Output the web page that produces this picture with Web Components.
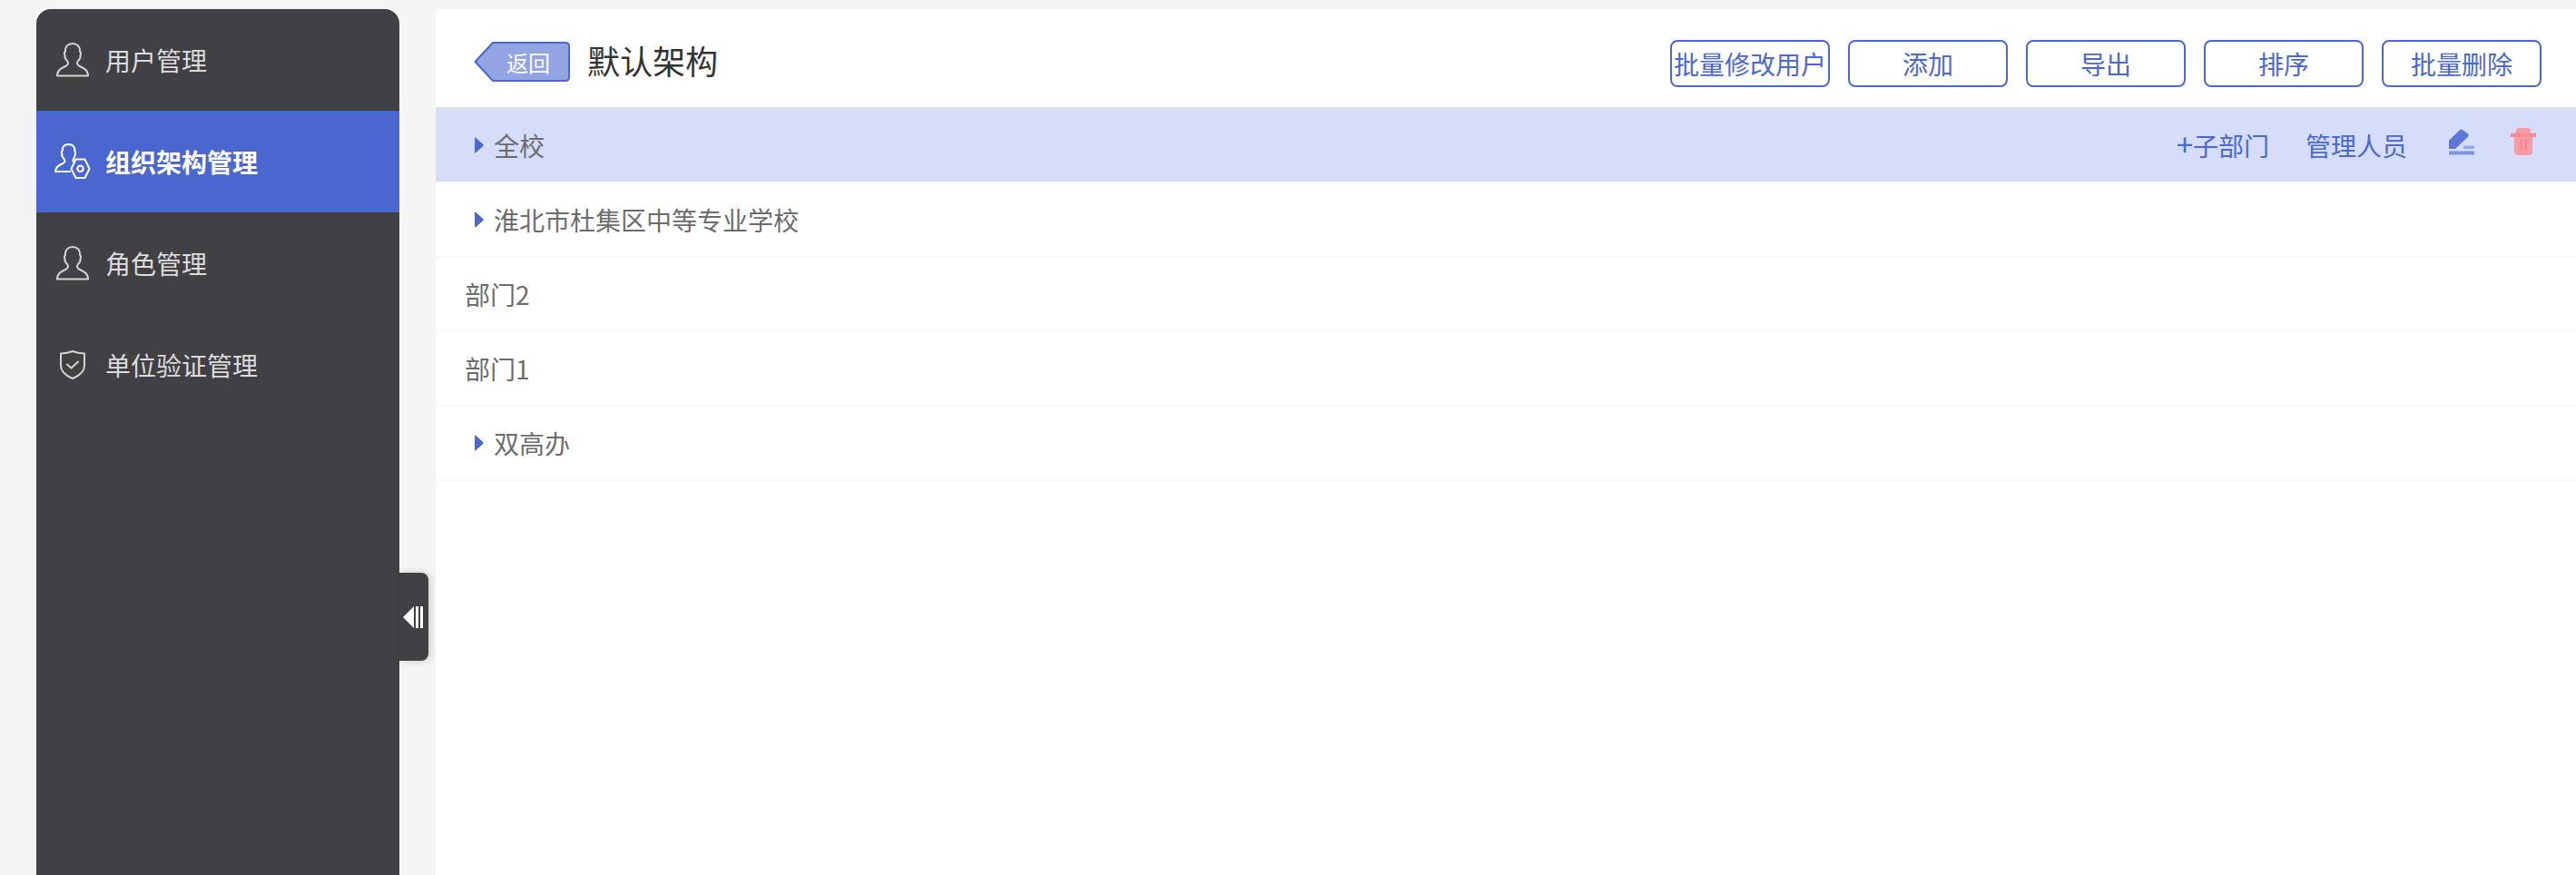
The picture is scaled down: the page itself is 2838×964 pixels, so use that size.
<!DOCTYPE html>
<html lang="zh">
<head>
<meta charset="utf-8">
<title>组织架构管理</title>
<style>
  html, body { margin: 0; height: 100%; }
  body {
    background: #f5f5f5;
    font-family: "Noto Sans CJK SC", "Liberation Sans", sans-serif;
    overflow: hidden;
  }
</style>
</head>
<body>
<org-page>
  <side-nav slot="nav">
    <nav-item icon="user">用户管理</nav-item>
    <nav-item icon="org" active>组织架构管理</nav-item>
    <nav-item icon="user">角色管理</nav-item>
    <nav-item icon="shield">单位验证管理</nav-item>
  </side-nav>
  <top-bar slot="main" heading="默认架构">
    <tool-button>批量修改用户</tool-button>
    <tool-button>添加</tool-button>
    <tool-button>导出</tool-button>
    <tool-button>排序</tool-button>
    <tool-button>批量删除</tool-button>
  </top-bar>
  <tree-row slot="main" branch active>
    全校
    <row-actions slot="actions"></row-actions>
  </tree-row>
  <tree-row slot="main" branch>淮北市杜集区中等专业学校</tree-row>
  <tree-row slot="main">部门2</tree-row>
  <tree-row slot="main">部门1</tree-row>
  <tree-row slot="main" branch>双高办</tree-row>
</org-page>

<script>
const ICONS = {
    user: `<svg width="36" height="38" viewBox="0 0 36 38" fill="none" stroke="#d4d4d4" stroke-width="2" stroke-linejoin="round">
        <path d="M1 36.500C1 30 6 28 11 25.500C13.500 24 13.500 22 12 20C10 18 9 16 9.500 14C8.500 12 9 10.500 10 10C9.500 4.500 13 1 18 1C23 1 26.500 4.500 26 10C27 10.500 27.500 12 26.500 14C27 16 26 18 24 20C22.500 22 22.500 24 25 25.500C30 28 35 30 35 36.500Z"/>
    </svg>`,
    org: `<svg width="40" height="40" viewBox="0 0 40 40" fill="none" stroke="#fff" stroke-width="2" stroke-linejoin="round">
        <path d="M18 31H1C1 26 5 24 9.500 22C12 20.500 12 19 10.500 17C8.500 15 8 13 8.300 11.500C7.500 10 8 8.500 8.800 8C8.500 3.500 11 1 15.500 1C20 1 22.500 3.500 22.300 8C23 8.800 23.200 10 22.800 11.500C23 13 22.500 15 21 17C20.500 18 20.300 19.500 21 20.500"/>
        <path d="M23.500 17.500H33.500L38.500 28L33.500 38H23.500L18.500 28Z" fill="#4a67cf"/>
        <circle cx="28.500" cy="27.800" r="3.200" stroke-width="2.200"/>
    </svg>`,
    shield: `<svg width="28" height="32" viewBox="0 0 28 32" fill="none" stroke="#d4d4d4" stroke-width="2" stroke-linejoin="round" stroke-linecap="round">
        <path d="M14 1C18 2.500 22 3.300 27 3.500V17C27 23 21 28 14 31C7 28 1 23 1 17V3.500C6 3.300 10 2.500 14 1Z"/>
        <path d="M8 15.500L12.500 19.500L20 12.500" />
    </svg>`
};

class OrgPage extends HTMLElement {
    constructor() {
        super();
        this.attachShadow({ mode: "open" });
        this.shadowRoot.innerHTML = `
        <style>
          :host {
            display: flex;
            height: 100vh;
            box-sizing: border-box;
          }
          .left {
            flex: 0 0 auto;
            padding: 10px 0 0 40px;
            background: linear-gradient(90deg, #f3f3f6 40px, transparent 40px);
            display: flex;
          }
          .main {
            flex: 1;
            margin: 10px 0 0 40px;
            background: #fff;
          }
        </style>
        <div class="left"><slot name="nav"></slot></div>
        <div class="main"><slot name="main"></slot></div>
      `;
    }
}

class SideNav extends HTMLElement {
    constructor() {
        super();
        this.attachShadow({ mode: "open" });
        this.shadowRoot.innerHTML = `
        <style>
          :host {
            display: block;
            position: relative;
            width: 400px;
            background: #414045;
            border-radius: 16px 16px 0 0;
          }
          .toggle {
            position: absolute;
            left: 400px;
            top: 621px;
            width: 32px;
            height: 97px;
            background: #414045;
            border-radius: 0 8px 8px 0;
            box-shadow: 2px 0 8px rgba(0, 0, 0, 0.18);
          }
          .toggle svg {
            position: absolute;
            left: 4px;
            top: 37px;
          }
        </style>
        <slot></slot>
        <div class="toggle">
          <svg width="23" height="24" viewBox="0 0 23 24" fill="#fff">
            <path d="M0 12L12 0V24Z"/>
            <rect x="14" width="3" height="24"/>
            <rect x="19" width="3" height="24"/>
          </svg>
        </div>
      `;
    }
}

class NavItem extends HTMLElement {
    constructor() {
        super();
        this.attachShadow({ mode: "open" });
        this.shadowRoot.innerHTML = `
        <style>
          :host {
            display: flex;
            align-items: center;
            height: 112px;
            padding-left: 20px;
            gap: 16px;
            font-size: 28px;
            color: #dcdcdc;
          }
          :host([active]) {
            background: #4a67cf;
            color: #fff;
            font-weight: 700;
          }
          .icon {
            width: 40px;
            display: flex;
            justify-content: center;
          }
        </style>
        <span class="icon">${ICONS[this.getAttribute("icon")] || ""}</span>
        <slot></slot>
      `;
    }
}

class TopBar extends HTMLElement {
    constructor() {
        super();
        this.attachShadow({ mode: "open" });
        this.shadowRoot.innerHTML = `
        <style>
          :host {
            display: flex;
            align-items: center;
            box-sizing: border-box;
            height: 110px;
            padding: 12px 38px 0 42px;
            border-bottom: 2px solid #dedede;
          }
          back-button { margin-bottom: 4px; }
          h1 {
            margin: 0 0 8px 19px;
            font-size: 36px;
            font-weight: 400;
            color: #333;
          }
          .tools {
            margin-left: auto;
            display: flex;
            gap: 20px;
          }
        </style>
        <back-button>返回</back-button>
        <h1>${this.getAttribute("heading")}</h1>
        <div class="tools"><slot></slot></div>
      `;
    }
}

class BackButton extends HTMLElement {
    constructor() {
        super();
        this.attachShadow({ mode: "open" });
        this.shadowRoot.innerHTML = `
        <style>
          :host {
            display: grid;
            width: 106px;
            height: 44px;
            font-size: 24px;
            color: #fff;
            cursor: pointer;
          }
          svg, .label { grid-area: 1 / 1; }
          .label {
            display: flex;
            align-items: center;
            padding-left: 36px;
          }
        </style>
        <svg width="106" height="44" viewBox="0 0 106 44">
          <path d="M1.500 22L21 1H101Q105 1 105 5V39Q105 43 101 43H21Z" fill="#93a4e2" stroke="#4a68d0" stroke-width="2" stroke-linejoin="round"/>
        </svg>
        <span class="label"><slot></slot></span>
      `;
    }
}

class ToolButton extends HTMLElement {
    constructor() {
        super();
        this.attachShadow({ mode: "open" });
        this.shadowRoot.innerHTML = `
        <style>
          :host {
            display: flex;
            align-items: center;
            justify-content: center;
            box-sizing: border-box;
            width: 176px;
            height: 52px;
            border: 2px solid #4a68d0;
            border-radius: 8px;
            font-size: 28px;
            color: #4a68d0;
            white-space: nowrap;
            cursor: pointer;
          }
        </style>
        <slot></slot>
      `;
    }
}

class TreeRow extends HTMLElement {
    constructor() {
        super();
        this.attachShadow({ mode: "open" });
        this.shadowRoot.innerHTML = `
        <style>
          :host {
            display: flex;
            align-items: center;
            box-sizing: border-box;
            height: 82px;
            padding: 0 44px 0 32px;
            border-bottom: 2px solid #f7f7f7;
            font-size: 28px;
            color: #6c6c70;
          }
          :host([branch]) { padding-left: 43px; }
          :host([active]) { background: #d5ddfb; }
          .arrow { display: none; margin-right: 11px; }
          :host([branch]) .arrow { display: block; }
          .actions { margin-left: auto; }
        </style>
        <svg class="arrow" width="10" height="18" viewBox="0 0 10 18"><path d="M0 1Q0 0 1 .8L9.200 8Q10 9 9.200 10L1 17.200Q0 18 0 17Z" fill="#4a68d0"/></svg>
        <slot></slot>
        <div class="actions"><slot name="actions"></slot></div>
      `;
    }
}

class RowActions extends HTMLElement {
    constructor() {
        super();
        this.attachShadow({ mode: "open" });
        this.shadowRoot.innerHTML = `
        <style>
          :host {
            display: flex;
            align-items: center;
            font-size: 28px;
            color: #4a68d0;
          }
          span { cursor: pointer; }
          .plus { font-size: 33px; line-height: 1; }
          .people { margin-left: 40px; }
          .edit { margin: 0 0 7px 46px; }
          .trash { margin: 0 0 8px 40px; }
          svg { display: block; cursor: pointer; }
        </style>
        <span><span class="plus">+</span>子部门</span>
        <span class="people">管理人员</span>
        <svg class="edit" width="28" height="29" viewBox="0 0 28 29">
          <path d="M0 22V13L11.500 1.500Q13 0 15 1L20.500 5Q22.500 6.500 21 8.500L7 22Z" fill="#5d77d6"/>
          <rect y="24.500" width="28" height="4" fill="#7f93e0"/>
          <rect x="16" y="18.500" width="12" height="3.500" fill="#96a8e6"/>
        </svg>
        <svg class="trash" width="28" height="30" viewBox="0 0 28 30">
          <path d="M6 6V3Q6 0 9 0H19Q22 0 22 3V6Z" fill="#f89aa4"/>
          <path d="M4 10H24V26Q24 30 20 30H8Q4 30 4 26Z" fill="#f89aa4"/>
          <rect y="5.700" width="28" height="4.300" fill="#ff8a92"/>
          <rect x="10.500" y="12" width="2" height="12" fill="#f5848e"/>
          <rect x="16" y="12" width="2" height="12" fill="#f5848e"/>
        </svg>
      `;
    }
}

customElements.define("org-page", OrgPage);
customElements.define("side-nav", SideNav);
customElements.define("nav-item", NavItem);
customElements.define("top-bar", TopBar);
customElements.define("back-button", BackButton);
customElements.define("tool-button", ToolButton);
customElements.define("tree-row", TreeRow);
customElements.define("row-actions", RowActions);
</script>
</body>
</html>
